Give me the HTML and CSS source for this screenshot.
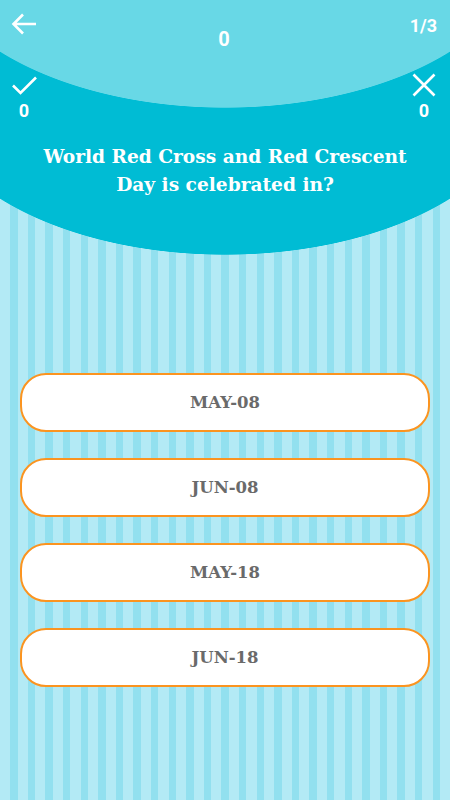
FILE: index.html
```html
<!DOCTYPE html>
<html lang="en">
<head>
  <meta charset="UTF-8">
  <meta name="viewport" content="width=device-width, initial-scale=1.0">
  <title>Quiz</title>
  <link rel="stylesheet" href="styles.css">
</head>
<body>
  <div class="screen">
    <div class="head">
      <div class="bar">
        <svg class="back" width="26" height="22" viewBox="0 0 26 22">
          <path d="M2 11H25M12 1.5L2.5 11L12 20.5" fill="none" stroke="#fff" stroke-width="2.6"/>
        </svg>
        <div class="score">0</div>
        <div class="count">1/3</div>
      </div>

      <div class="tally">
        <div class="side">
          <svg width="26" height="24" viewBox="0 0 26 24">
            <path d="M2 12.5L9.5 20L25 4.5" fill="none" stroke="#fff" stroke-width="2.6"/>
          </svg>
          <span class="num">0</span>
        </div>
        <div class="side">
          <svg width="26" height="24" viewBox="0 0 26 24">
            <path d="M2.5 1.5L23.5 22.5M23.5 1.5L2.5 22.5" fill="none" stroke="#fff" stroke-width="2.6"/>
          </svg>
          <span class="num">0</span>
        </div>
      </div>
    </div>

    <h1 class="question">World Red Cross and Red Crescent<br>Day is celebrated in?</h1>

    <div class="answers">
      <button class="answer">MAY-08</button>
      <button class="answer">JUN-08</button>
      <button class="answer">MAY-18</button>
      <button class="answer">JUN-18</button>
    </div>
  </div>
</body>
</html>
```

FILE: styles.css
```css
body, html {
    margin: 0;
    padding: 0;
  }
  body {
    font-family: "DejaVu Serif", serif;
  }
  .screen {
    width: 450px;
    min-height: 800px;
    /* two ellipses for the header, stripes underneath */
    background:
      radial-gradient(300px 165px at 225px -57px, #68d8e6 99.6%, rgba(104, 216, 230, 0) 100%),
      radial-gradient(300px 165px at 225px 90px, #00bcd4 99.6%, rgba(0, 188, 212, 0) 100%),
      repeating-linear-gradient(90deg, #b3eaf5 0, #b3eaf5 10.2px, #92e0ef 10.2px, #92e0ef 17.6px);
    color: #fff;
    overflow: hidden;
  }
  .head {
    padding: 13px 13px 0 11px;
  }
  .bar {
    display: grid;
    grid-template-columns: 1fr auto 1fr;
    align-items: start;
  }
  .back {
    display: block;
  }
  .score {
    font-family: Roboto, sans-serif;
    font-weight: 700;
    font-size: 20px;
    line-height: 20px;
    margin-top: 16px;
  }
  .count {
    justify-self: end;
    font-family: Roboto, sans-serif;
    font-weight: 700;
    font-size: 18px;
    line-height: 18px;
    margin-top: 4px;
  }
  .tally {
    display: flex;
    justify-content: space-between;
    margin-top: 24px;
  }
  .side {
    display: flex;
    flex-direction: column;
    align-items: center;
  }
  .side svg {
    display: block;
  }
  .num {
    font-family: Roboto, sans-serif;
    font-weight: 700;
    font-size: 18px;
    line-height: 18px;
    margin-top: 5px;
  }
  .question {
    margin: 23px 0 0;
    font-size: 18.6px;
    line-height: 28px;
    font-weight: 700;
    text-align: center;
  }
  .answers {
    display: flex;
    flex-direction: column;
    gap: 26px;
    padding: 0 20px;
    margin-top: 174px;
  }
  .answer {
    height: 59px;
    background-color: #fff;
    border: 2px solid #fb9420;
    border-radius: 26px;
    font-family: "DejaVu Serif", serif;
    font-weight: 700;
    font-size: 16.5px;
    color: #6a6a6a;
  }
```
